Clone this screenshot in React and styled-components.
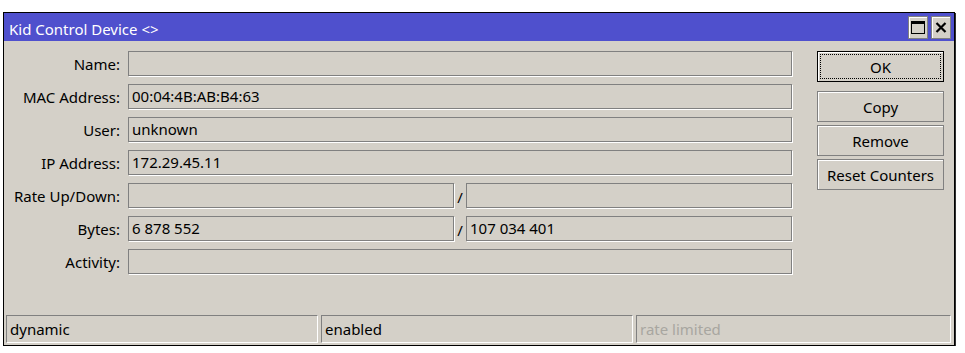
import styled, { createGlobalStyle } from 'styled-components';

const GlobalStyle = createGlobalStyle`
    body {
        margin: 0;
        background: #ffffff;
        font-family: "Noto Sans", "Liberation Sans", sans-serif;
    }
`

const rows = [
    { label: 'Name:', value: '' },
    { label: 'MAC Address:', value: '00:04:4B:AB:B4:63' },
    { label: 'User:', value: 'unknown' },
    { label: 'IP Address:', value: '172.29.45.11' },
    { label: 'Rate Up/Down:', value: '', pair: '' },
    { label: 'Bytes:', value: '6 878 552', pair: '107 034 401' },
    { label: 'Activity:', value: '' },
]

const App = () => {
    return (
        <>
            <GlobalStyle />
            <Page>
                <Window>
                    <TitleBar>
                        <Title>Kid Control Device &lt;&gt;</Title>
                        <TitleButtons>
                            <TitleButton>
                                <svg width="14" height="13" viewBox="0 0 14 13">
                                    <rect x="0.5" y="0.5" width="13" height="12" fill="none" stroke="#000" />
                                    <rect x="0" y="0" width="14" height="3" fill="#000" />
                                </svg>
                            </TitleButton>
                            <TitleButton>
                                <svg width="12" height="11" viewBox="0 0 12 11">
                                    <path d="M1.5 1 L10.5 10 M10.5 1 L1.5 10" stroke="#000" strokeWidth="2.2" />
                                </svg>
                            </TitleButton>
                        </TitleButtons>
                    </TitleBar>
                    <Content>
                        <Form>
                            {rows.map((row) => (
                                <Row key={row.label}>
                                    <Label>{row.label}</Label>
                                    {row.pair !== undefined ? (
                                        <Pair>
                                            <Field>{row.value}</Field>
                                            <Slash>/</Slash>
                                            <Field>{row.pair}</Field>
                                        </Pair>
                                    ) : (
                                        <Field>{row.value}</Field>
                                    )}
                                </Row>
                            ))}
                        </Form>
                        <Buttons>
                            <Button $primary>
                                <FocusRing>OK</FocusRing>
                            </Button>
                            <ButtonGroup>
                                <Button>Copy</Button>
                                <Button>Remove</Button>
                                <Button>Reset Counters</Button>
                            </ButtonGroup>
                        </Buttons>
                    </Content>
                    <StatusBar>
                        <StatusPanel>dynamic</StatusPanel>
                        <StatusPanel>enabled</StatusPanel>
                        <StatusPanel $disabled>rate limited</StatusPanel>
                    </StatusBar>
                </Window>
            </Page>
        </>
    )
}

export default App;

const Page = styled.div`
    padding: 12px 0 0 3px;
`

const Window = styled.div`
    width: 950px;
    height: 332px;
    background: #d4d0c8;
    border: 1px solid #000;
    box-shadow: 1px 1px 0 #303030;
    display: flex;
    flex-direction: column;
`

const TitleBar = styled.div`
    height: 28px;
    background: #4f50cd;
    display: flex;
    align-items: center;
    justify-content: space-between;
    padding: 0 3px 0 5px;
`

const Title = styled.span`
    color: #fff;
    font-size: 15px;
    line-height: 20px;
    padding-top: 3px;
`

const TitleButtons = styled.div`
    display: flex;
    gap: 3px;
    margin-top: 1px;
`

const TitleButton = styled.div`
    width: 18px;
    height: 21px;
    background: #d4d0c8;
    border: 1px solid #808080;
    box-shadow: inset 1px 1px 0 #fff;
    display: flex;
    align-items: center;
    justify-content: center;
`

const Content = styled.div`
    flex: 1;
    display: flex;
    padding: 10px 0 0 0;
`

const Form = styled.div`
    display: flex;
    flex-direction: column;
    gap: 8px;
`

const Row = styled.div`
    display: grid;
    grid-template-columns: 116px 664px;
    column-gap: 8px;
    align-items: center;
`

const Label = styled.span`
    font-size: 15px;
    line-height: 20px;
    color: #000;
    text-align: right;
`

const Field = styled.div`
    height: 23px;
    line-height: 23px;
    border: 1px solid #808080;
    box-shadow: 1px 1px 0 #fff;
    padding: 0 3px;
    font-size: 15px;
    color: #000;
    white-space: nowrap;
    overflow: hidden;
`

const Pair = styled.div`
    display: grid;
    grid-template-columns: 1fr 12px 1fr;
    align-items: center;
`

const Slash = styled.span`
    font-size: 15px;
    line-height: 20px;
    text-align: center;
    padding-top: 2px;
`

const Buttons = styled.div`
    margin-left: 25px;
    width: 127px;
    display: flex;
    flex-direction: column;
    gap: 9px;
`

const ButtonGroup = styled.div`
    display: flex;
    flex-direction: column;
    gap: 3px;
`

const Button = styled.div`
    height: 31px;
    box-sizing: border-box;
    padding: ${(p) => (p.$primary ? '2px' : '0')};
    border: 1px solid ${(p) => (p.$primary ? '#000' : '#808080')};
    box-shadow: inset 1px 1px 0 #fff;
    display: flex;
    align-items: center;
    justify-content: center;
    font-size: 15px;
    line-height: 20px;
    color: #000;
`

const FocusRing = styled.div`
    flex: 1;
    align-self: stretch;
    border: 1px dotted #000;
    display: flex;
    align-items: center;
    justify-content: center;
`

const StatusBar = styled.div`
    display: grid;
    grid-template-columns: 312px 312px 1fr;
    gap: 3px;
    padding: 0 3px 2px 2px;
`

const StatusPanel = styled.div`
    height: 26px;
    line-height: 26px;
    border-top: 1px solid #808080;
    border-left: 1px solid #808080;
    border-bottom: 1px solid #fff;
    border-right: 1px solid #fff;
    padding: 0 3px;
    font-size: 15px;
    color: ${(p) => (p.$disabled ? '#a8a6a0' : '#000')};
`
